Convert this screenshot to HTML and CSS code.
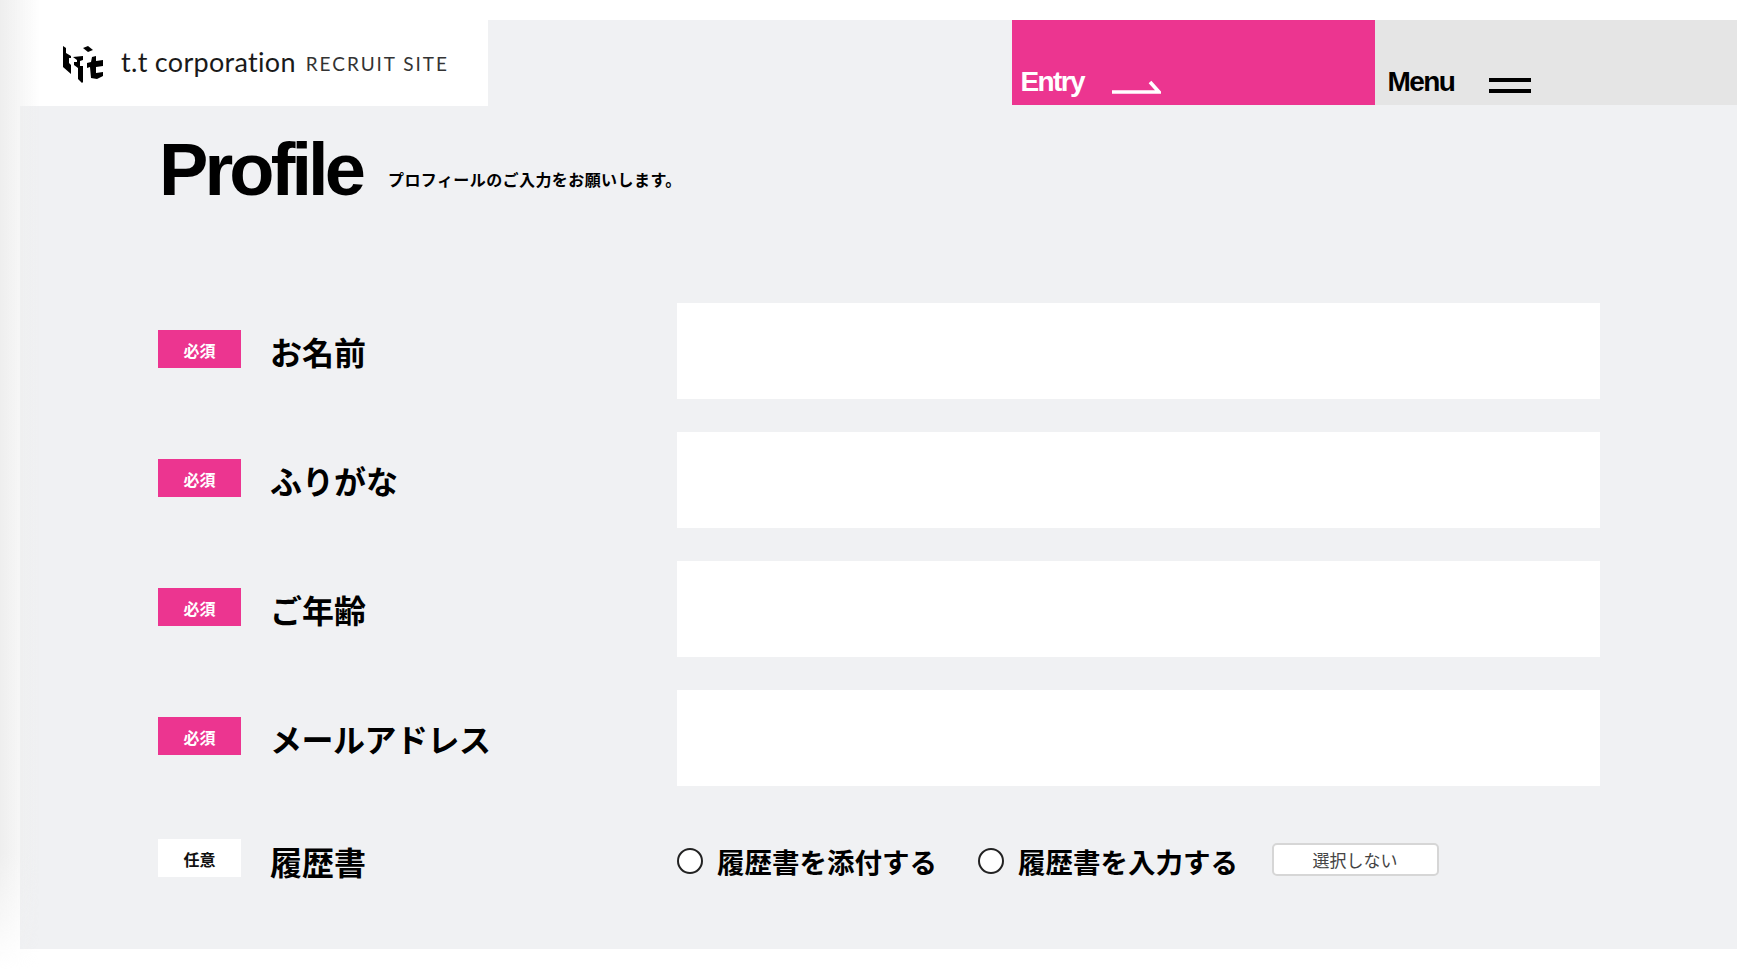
FILE: index.html
```html
<!DOCTYPE html>
<html lang="ja">
<head>
<meta charset="utf-8">
<title>Profile | t.t corporation RECRUIT SITE</title>
<link rel="stylesheet" href="styles.css">
</head>
<body>
<div class="edge"></div>
<main class="panel">
  <header class="top">
    <a class="brand">
      <svg class="mark" viewBox="0 0 41 38" aria-hidden="true">
        <path d="M0 0L3 2L3 7L8 10L8 12L6 12L6 17L8 19L8 28L0 21Z"/>
        <path d="M10 11L20 10L20 14L17 15L17 20L20 20L20 36L19 37L15 33L15 22L11 19L11 16L14 16L14 14Z"/>
        <path d="M20 2L25 0L30 4L25 6Z"/>
        <path d="M29 11L33 10L33 15L40 14L40 20L33 21L33 27L40 26L40 30L34 33L28 32L27 21L24 22L24 17L28 16Z"/>
      </svg>
      <span class="brand-name">t.t corporation</span>
      <span class="brand-sub">RECRUIT SITE</span>
    </a>
    <div class="spacer"></div>
    <a class="nav nav-entry">
      <span>Entry</span>
      <svg class="arrow" viewBox="0 0 49 14" aria-hidden="true"><path d="M0 12h47L38 2" fill="none" stroke="#fff" stroke-width="3.6"/></svg>
    </a>
    <a class="nav nav-menu">
      <span>Menu</span>
      <span class="burger"><i></i><i></i></span>
    </a>
  </header>

  <div class="title">
    <h1>Profile</h1>
    <p>プロフィールのご入力をお願いします。</p>
  </div>

  <form class="form">
    <div class="row">
      <span class="tag">必須</span>
      <label class="name">お名前</label>
      <input class="field" type="text">
    </div>
    <div class="row">
      <span class="tag">必須</span>
      <label class="name">ふりがな</label>
      <input class="field" type="text">
    </div>
    <div class="row">
      <span class="tag">必須</span>
      <label class="name">ご年齢</label>
      <input class="field" type="text">
    </div>
    <div class="row">
      <span class="tag">必須</span>
      <label class="name name-tight">メールアドレス</label>
      <input class="field" type="text">
    </div>
    <div class="row row-last">
      <span class="tag tag-opt">任意</span>
      <label class="name">履歴書</label>
      <div class="choices">
        <span class="choice"><i class="radio"></i>履歴書を添付する</span>
        <span class="choice"><i class="radio"></i>履歴書を入力する</span>
        <button class="clear" type="button">選択しない</button>
      </div>
    </div>
  </form>
</main>
</body>
</html>
```

FILE: styles.css
```css
* { box-sizing: border-box; }
html, body { margin: 0; height: 100%; background: #fff; overflow: hidden; }
body {
  position: relative;
  font-family: "Liberation Sans", "Noto Sans CJK JP", sans-serif;
  color: #000;
  padding: 20px 23px 21px 20px;
}
.edge {
  position: absolute;
  left: 0; top: 0; bottom: 0;
  width: 40px;
  background: linear-gradient(90deg, #eeeeee, rgba(238,238,238,0));
  -webkit-mask-image: linear-gradient(180deg, #000 88%, transparent 100%);
  z-index: 3;
}
.panel { background: #f0f1f3; height: 929px; }

.top { display: flex; height: 85px; }
.brand {
  width: 468px;
  height: 86px;
  background: #fff;
  display: flex;
  align-items: center;
  padding-left: 43px;
  color: #1a1a1a;
  position: relative;
  z-index: 2;
}
.mark { width: 41px; height: 38px; margin-right: 17px; margin-top: 3px; flex: none; }
.brand-name { font-family: Lato, sans-serif; font-size: 27px; letter-spacing: 0.3px; margin-right: 10px; margin-top: -4px; }
.brand-sub { font-family: Lato, sans-serif; font-size: 19px; letter-spacing: 1.95px; color: #333; white-space: nowrap; }
.spacer { flex: 1; }
.nav {
  width: 362.5px;
  display: flex;
  align-items: flex-end;
  font-weight: 700;
  font-size: 28px;
  letter-spacing: -1.6px;
  padding-bottom: 7px;
  line-height: 32px;
}
.nav-entry { background: #ec3590; color: #fff; padding-left: 8.5px; }
.nav-menu { background: #e5e5e5; color: #000; padding-left: 13px; }
.arrow { width: 49px; height: 14px; margin-left: 27.5px; margin-bottom: 4px; }
.burger { display: flex; flex-direction: column; gap: 7px; width: 42px; margin-left: 35px; margin-bottom: 5px; }
.burger i { display: block; height: 4px; background: #000; }

.title { display: flex; align-items: flex-start; padding: 21px 0 0 139px; height: 198px; }
.title h1 { margin: 0; font-size: 74px; line-height: 88px; font-weight: 700; letter-spacing: -3.9px; }
.title p {
  margin: 41px 0 0 26px;
  font-size: 16px;
  line-height: 24px;
  font-weight: 700;
  letter-spacing: 0.42px;
  font-family: "Noto Sans CJK JP", sans-serif;
}

.form { padding-left: 138px; }
.row {
  display: grid;
  grid-template-columns: 83px 436px 922.5px;
  align-items: center;
  height: 96px;
  margin-bottom: 33px;
}
.row-last { height: 82px; margin-bottom: 0; }
.tag {
  height: 38px;
  background: #ec3590;
  color: #fff;
  font: 700 16px/40px "Noto Sans CJK JP", sans-serif;
  text-align: center;
  margin-bottom: 4px;
}
.tag-opt { background: #fff; color: #111; }
.name {
  font: 700 32px/40px "Noto Sans CJK JP", sans-serif;
  padding-left: 29px;
}
.name-tight { letter-spacing: -0.5px; }
.row-last .name { margin-top: 2px; }
.field { border: 0; background: #fff; height: 96px; width: 100%; display: block; }
.choices { display: flex; align-items: center; }
.choice {
  display: flex;
  align-items: center;
  font: 700 27.5px/40px "Noto Sans CJK JP", sans-serif;
  margin-right: 41px;
  margin-top: 2px;
}
.radio {
  width: 26px; height: 26px;
  border: 2px solid #222;
  border-radius: 50%;
  background: #fff;
  margin-right: 14px;
}
.clear {
  width: 167px; height: 33px;
  border: 2px solid #d6d6d6;
  border-radius: 5px;
  background: #fff;
  color: #444;
  font: 400 17px/1 "Noto Sans CJK JP", sans-serif;
  padding: 0;
  margin-left: -7.5px;
  margin-top: -2px;
}
```
